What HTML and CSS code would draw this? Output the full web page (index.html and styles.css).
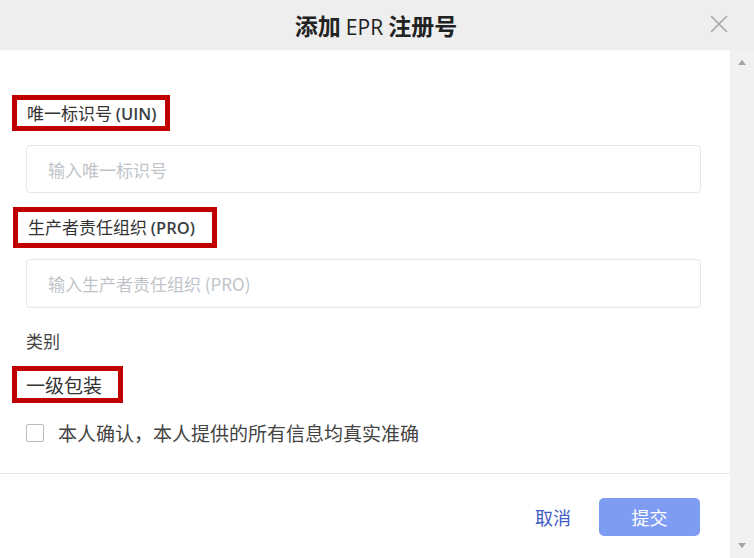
FILE: index.html
```html
<!DOCTYPE html>
<html lang="zh">
<head>
    <meta charset="UTF-8">
    <meta name="viewport" content="width=device-width, initial-scale=1.0">
    <title>添加 EPR 注册号</title>
    <link rel="stylesheet" href="styles.css">
</head>
<body>

    <div class="modal">
        <!-- Kopfzeile mit Titel und Schließen -->
        <div class="modal-header">
            <h1 class="modal-title">添加 <span class="latin-title">EPR</span> 注册号</h1>
            <button class="close-btn" aria-label="关闭">
                <svg width="18" height="18" viewBox="0 0 18 18">
                    <path d="M1 1 L17 17 M17 1 L1 17" stroke="#a3a8ae" stroke-width="1.6" fill="none"/>
                </svg>
            </button>
        </div>

        <div class="modal-main">
            <div class="modal-body">
                <form class="epr-form">
                    <label class="field-label boxed box-uin" for="uin"><span>唯一标识号 <span class="latin">(UIN)</span></span></label>
                    <input class="text-input input-uin" id="uin" type="text" placeholder="输入唯一标识号">

                    <label class="field-label boxed box-pro" for="pro"><span>生产者责任组织 <span class="latin">(PRO)</span></span></label>
                    <input class="text-input input-pro" id="pro" type="text" placeholder="输入生产者责任组织 (PRO)">

                    <div class="field-label plain">类别</div>
                    <div class="field-label boxed box-cat">一级包装</div>

                    <label class="confirm-row">
                        <span class="checkbox"></span>
                        <span>本人确认，本人提供的所有信息均真实准确</span>
                    </label>
                </form>

                <div class="modal-footer">
                    <button class="btn-cancel" type="button">取消</button>
                    <button class="btn-submit" type="button">提交</button>
                </div>
            </div>

            <!-- Scrollleiste -->
            <div class="scrollbar">
                <span class="arrow up"></span>
                <span class="arrow down"></span>
            </div>
        </div>
    </div>

</body>
</html>
```

FILE: styles.css
```css
/* Grundstil */
body {
    margin: 0;
    padding: 0;
    font-family: "Noto Sans CJK SC", "Noto Sans", sans-serif;
    color: #333;
    background: #fff;
}

.modal {
    width: 754px;
    height: 558px;
    display: flex;
    flex-direction: column;
    overflow: hidden;
}

/* Kopfzeile */
.modal-header {
    height: 50px;
    flex: none;
    background: #eeeeee;
    display: flex;
    align-items: center;
    justify-content: center;
    position: relative;
}

.modal-title {
    margin: 0;
    font-size: 23px;
    font-weight: 700;
    color: #222;
    padding-right: 2px;
}

.latin-title {
    font-family: "Open Sans", sans-serif;
    font-weight: 500;
    font-size: 21px;
}

.close-btn {
    position: absolute;
    right: 26px;
    top: 15px;
    width: 18px;
    height: 18px;
    padding: 0;
    border: none;
    background: none;
    display: flex;
}

.modal-main {
    flex: 1;
    display: flex;
}

.modal-body {
    width: 730px;
    display: flex;
    flex-direction: column;
}

/* Formular */
.epr-form {
    display: flex;
    flex-direction: column;
    align-items: flex-start;
    padding: 45px 29px 0 26px;
    border-bottom: 1px solid #e6e6e6;
}

.field-label {
    font-size: 17px;
    line-height: 24px;
    color: #333;
}

.field-label .latin {
    font-family: "Open Sans", sans-serif;
    font-weight: 600;
    font-size: 16.5px;
    color: #3a3f44;
}

/* rote Markierung */
.boxed {
    box-sizing: border-box;
    border: 5px solid #c00000;
    margin-left: -14px;
    padding: 0 9px 0 10px;
    display: flex;
    align-items: center;
}

.box-uin {
    height: 36px;
}

.box-pro {
    height: 41px;
    margin-left: -13px;
    padding-right: 17px;
}

.box-cat {
    height: 37px;
    margin-top: 13px;
    padding-left: 9px;
    padding-right: 16px;
    font-size: 19px;
}

.text-input {
    box-sizing: border-box;
    width: 100%;
    height: 48px;
    border: 1px solid #e5e6e8;
    border-radius: 4px;
    padding: 0 21px;
    font-family: inherit;
    font-size: 17px;
    color: #333;
    outline: none;
}

.text-input::placeholder {
    color: #c0c4c9;
}

.input-uin {
    margin-top: 14px;
    margin-bottom: 14px;
}

.input-pro {
    margin-top: 11px;
    height: 49px;
}

.plain {
    margin-top: 21px;
    font-size: 17px;
    color: #444;
}

.confirm-row {
    display: flex;
    align-items: center;
    gap: 14px;
    margin-top: 18px;
    margin-bottom: 28px;
    font-size: 19px;
    line-height: 24px;
    color: #444;
}

.checkbox {
    box-sizing: border-box;
    width: 18px;
    height: 18px;
    border: 1.5px solid #bcbcbc;
    border-radius: 2px;
    background: #fff;
}

/* Fußzeile */
.modal-footer {
    display: flex;
    justify-content: flex-end;
    align-items: center;
    gap: 28px;
    padding: 24px 30px 0 0;
}

.btn-cancel {
    border: none;
    background: none;
    padding: 0;
    font-family: inherit;
    font-size: 18px;
    color: #3f5bc4;
    cursor: pointer;
}

.btn-submit {
    width: 101px;
    height: 38px;
    border: none;
    border-radius: 5px;
    background: #7f9cf3;
    color: #fff;
    font-family: inherit;
    font-size: 18px;
    cursor: pointer;
}

/* Scrollleiste */
.scrollbar {
    width: 24px;
    background: #f1f1f1;
    position: relative;
}

.arrow {
    position: absolute;
    left: 8px;
    width: 0;
    height: 0;
    border-left: 4px solid transparent;
    border-right: 4px solid transparent;
}

.arrow.up {
    top: 10px;
    border-bottom: 5px solid #a3a3a3;
}

.arrow.down {
    bottom: 10px;
    border-top: 5px solid #a3a3a3;
}
```
